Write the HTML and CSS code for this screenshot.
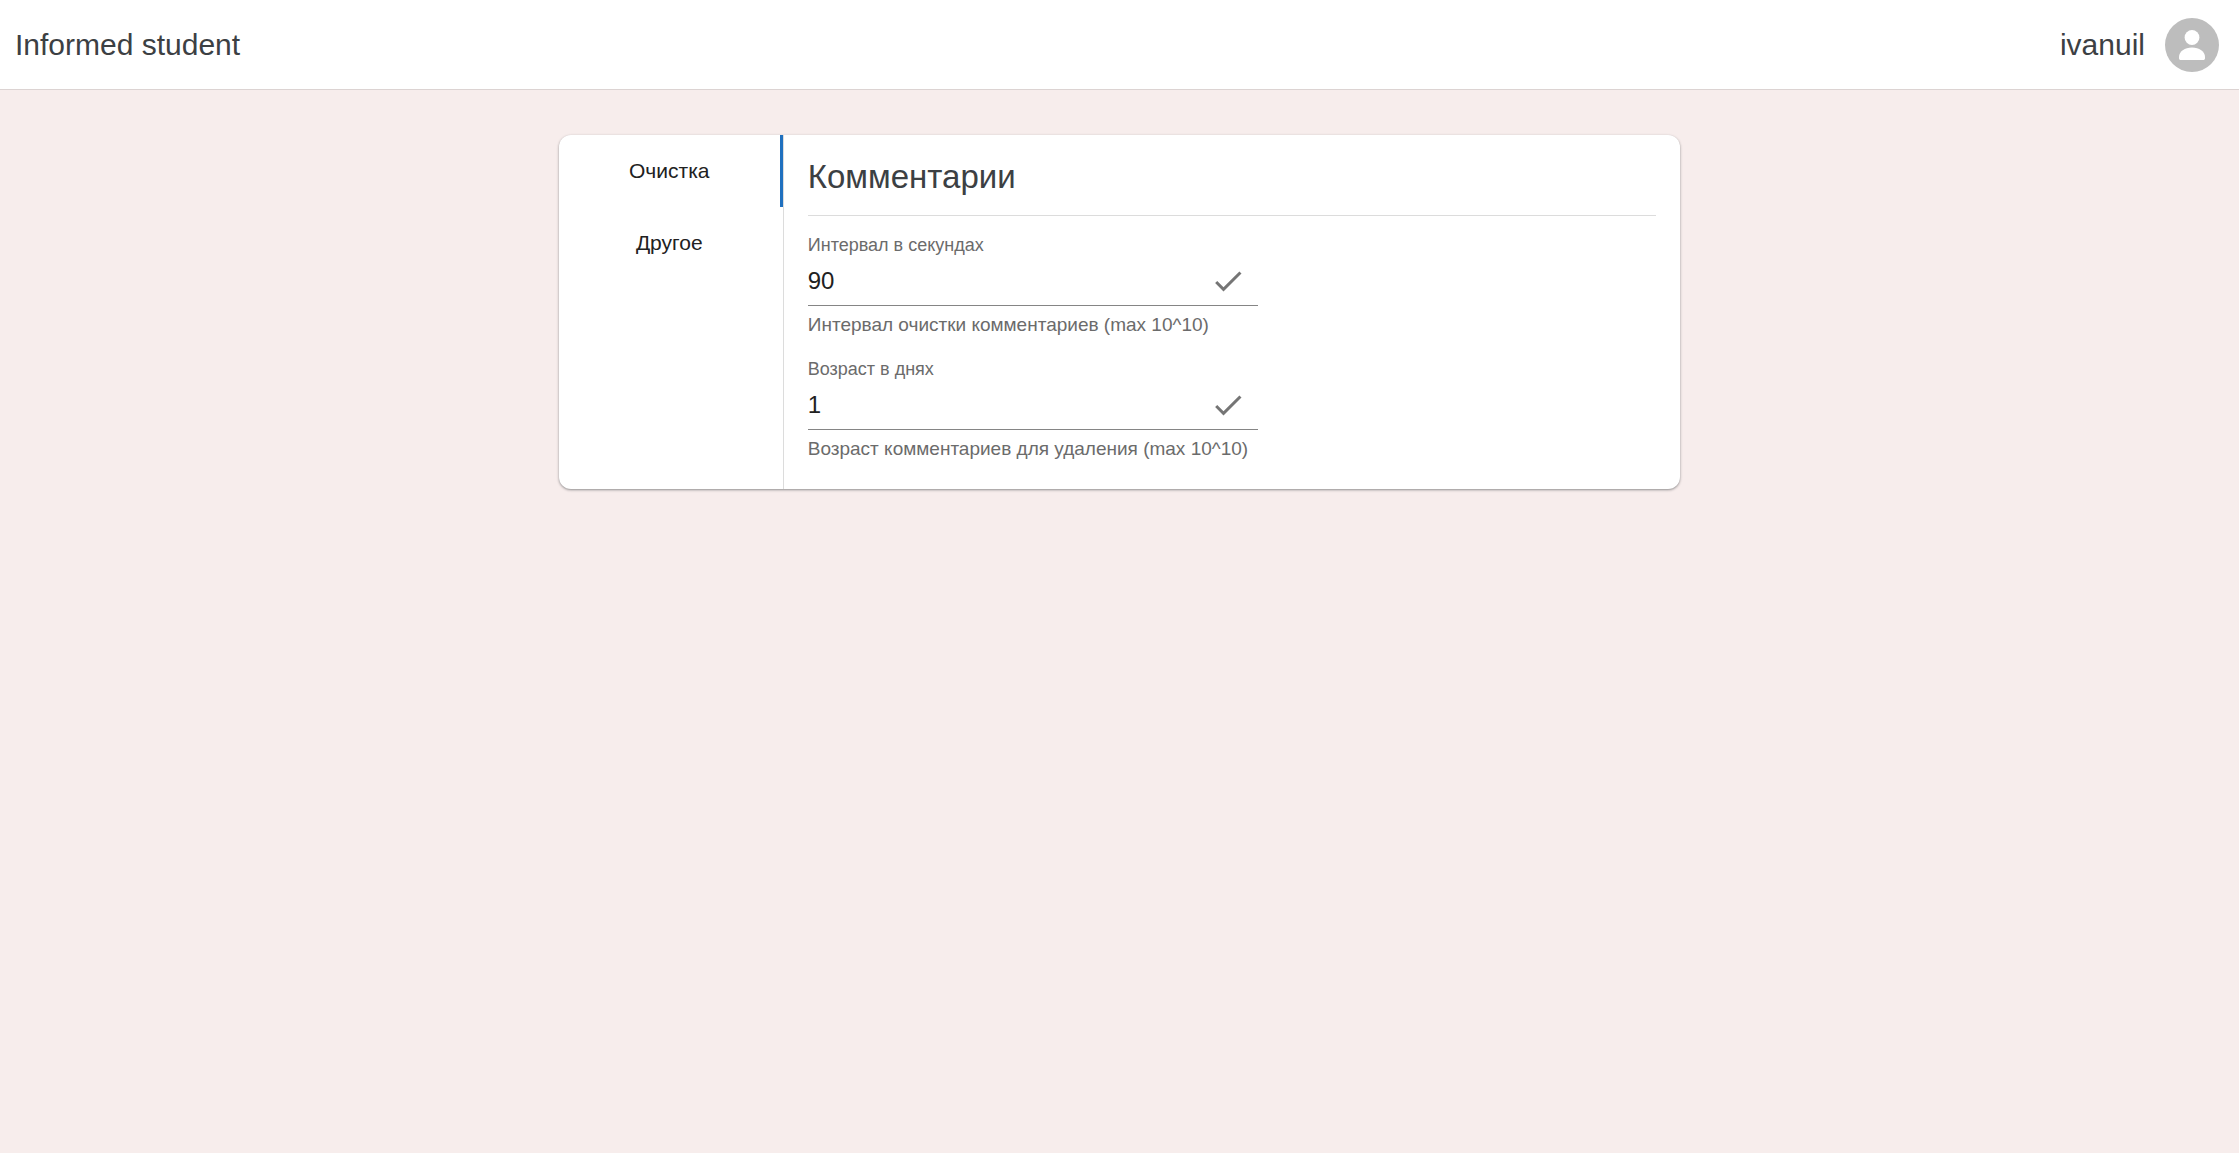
FILE: index.html
```html
<!DOCTYPE html>
<html lang="ru">
<head>
  <meta charset="utf-8">
  <meta name="viewport" content="width=device-width, initial-scale=1">
  <title>Informed student</title>
  <link rel="stylesheet" href="styles.css">
</head>
<body>
  <header class="topbar">
    <a class="brand" href="#">Informed student</a>
    <div class="account">
      <span>ivanuil</span>
      <button class="avatar" type="button" aria-label="Профиль">
        <svg viewBox="0 0 54 54" aria-hidden="true">
          <circle cx="27" cy="19.5" r="7.4"/>
          <path d="M14 40.2V39c0-5.500 5.800-9.500 13-9.500s13 4 13 9.500v1.200c0 1-.8 1.800-1.800 1.800H15.800c-1 0-1.800-.8-1.800-1.800z"/>
        </svg>
      </button>
    </div>
  </header>

  <main class="card">
    <nav class="tabs" role="tablist" aria-orientation="vertical">
      <button class="tab tab-active" type="button" role="tab" aria-selected="true">Очистка</button>
      <button class="tab" type="button" role="tab" aria-selected="false">Другое</button>
    </nav>
    <section class="panel">
      <h1 class="title">Комментарии</h1>
      <form class="fields">
        <div class="field">
          <label class="label" for="interval">Интервал в секундах</label>
          <div class="control">
            <input class="input" id="interval" type="text" inputmode="numeric" value="90" aria-describedby="interval-help">
            <button class="confirm" type="button" aria-label="Сохранить интервал">
              <svg viewBox="0 0 24 24" aria-hidden="true"><path d="M9 16.170 4.830 12l-1.420 1.410L9 19 21 7l-1.410-1.410z"/></svg>
            </button>
          </div>
          <p class="help" id="interval-help">Интервал очистки комментариев (max 10^10)</p>
        </div>
        <div class="field">
          <label class="label" for="age">Возраст в днях</label>
          <div class="control">
            <input class="input" id="age" type="text" inputmode="numeric" value="1" aria-describedby="age-help">
            <button class="confirm" type="button" aria-label="Сохранить возраст">
              <svg viewBox="0 0 24 24" aria-hidden="true"><path d="M9 16.170 4.830 12l-1.420 1.410L9 19 21 7l-1.410-1.410z"/></svg>
            </button>
          </div>
          <p class="help" id="age-help">Возраст комментариев для удаления (max 10^10)</p>
        </div>
      </form>
    </section>
  </main>
</body>
</html>
```
FILE: styles.css
```css
* {
  box-sizing: border-box;
}

body {
  margin: 0;
  min-height: 100vh;
  background: #f7edec;
  color: #212121;
  font-family: "Liberation Sans", Arial, sans-serif;
}

button {
  padding: 0;
  border: 0;
  background: none;
  color: inherit;
  font: inherit;
  cursor: pointer;
}

svg {
  display: block;
  width: 100%;
  height: 100%;
  fill: currentColor;
}

.topbar {
  display: flex;
  align-items: center;
  justify-content: space-between;
  padding: 18px 20px 17px 15px;
  border-bottom: 1px solid #dcd3d2;
  background: #fff;
  color: #3c4043;
  font-size: 30px;
}

.brand {
  color: inherit;
  text-decoration: none;
}

.account {
  display: flex;
  align-items: center;
  gap: 20px;
}

.avatar {
  width: 54px;
  height: 54px;
  border-radius: 50%;
  background: #bdbdbd;
  color: #fff;
}

.card {
  display: grid;
  grid-template-columns: 225px 1fr;
  width: calc(50% + 2px);
  min-width: 700px;
  margin: 45px auto;
  overflow: hidden;
  border-radius: 12px;
  background: #fff;
  box-shadow: 0 1px 3px rgba(60, 64, 67, 0.3), 0 1px 2px rgba(60, 64, 67, 0.3);
}

.tabs {
  display: flex;
  flex-direction: column;
  border-right: 1px solid #dcdcdc;
}

.tab {
  height: 72px;
  border-right: 3px solid transparent;
  font-size: 21px;
}

.tab-active {
  border-right-color: #1f70bf;
}

.panel {
  padding: 18px 24px 28px;
}

.title {
  margin: 0;
  padding-bottom: 14px;
  border-bottom: 1px solid #dcdcdc;
  color: #3c4043;
  font-size: 33px;
  font-weight: 400;
  line-height: 48px;
}

.fields {
  display: flex;
  flex-direction: column;
  gap: 20px;
  max-width: 450px;
  padding-top: 17px;
}

.label,
.help {
  display: block;
  margin: 0;
  color: #6b6b6b;
  font-size: 18px;
  line-height: 24px;
}

.help {
  margin-top: 7px;
  font-size: 19px;
  white-space: nowrap;
}

.control {
  display: flex;
  align-items: center;
  padding: 6px 12px 6px 0;
  border-bottom: 1px solid #858585;
}

.input {
  flex: 1;
  min-width: 0;
  height: 36px;
  padding: 0;
  border: 0;
  outline: 0;
  background: none;
  color: #212121;
  font: inherit;
  font-size: 24px;
}

.confirm {
  width: 36px;
  height: 36px;
  color: #757575;
}
```
